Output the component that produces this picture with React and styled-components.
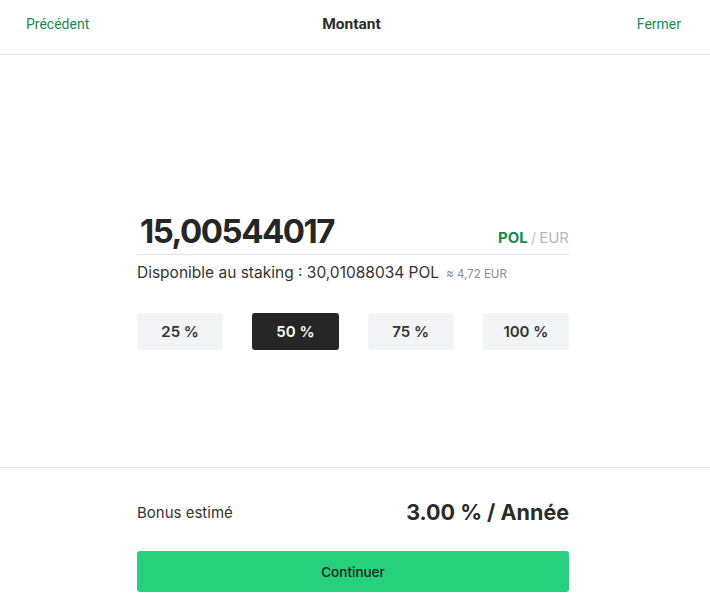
import { useState } from "react";
import styled, { createGlobalStyle } from "styled-components";

const GlobalStyle = createGlobalStyle`
  *, *::before, *::after {
    box-sizing: border-box;
  }
  html, body {
    margin: 0;
    padding: 0;
    background: #fff;
  }
  body {
    font-family: Inter, "Noto Sans", sans-serif;
    color: #2b2b2b;
  }
`;

const PRESETS = [25, 50, 75, 100];

export default function App() {
  const [preset, setPreset] = useState(50);

  return (
    <>
      <GlobalStyle />
      <Page>
        <Header>
          <NavLink type="button">Précédent</NavLink>
          <HeaderTitle>Montant</HeaderTitle>
          <NavLink type="button" $right>
            Fermer
          </NavLink>
        </Header>

        <Main>
          <Column>
            <AmountRow>
              <Amount>15,00544017</Amount>
              <Units>
                <Unit $active>POL</Unit>
                <Slash>/</Slash>
                <Unit>EUR</Unit>
              </Units>
            </AmountRow>
            <Available>
              Disponible au staking : 30,01088034 POL
              <Approx>≈ 4,72 EUR</Approx>
            </Available>
            <Presets>
              {PRESETS.map((p) => (
                <PresetButton
                  key={p}
                  type="button"
                  $active={preset === p}
                  onClick={() => setPreset(p)}
                >
                  {p} %
                </PresetButton>
              ))}
            </Presets>
          </Column>
        </Main>

        <Footer>
          <Column>
            <BonusRow>
              <BonusLabel>Bonus estimé</BonusLabel>
              <BonusValue>3.00 % / Année</BonusValue>
            </BonusRow>
            <ContinueButton type="button">Continuer</ContinueButton>
          </Column>
        </Footer>
      </Page>
    </>
  );
}

const Page = styled.div`
  width: 710px;
  height: 613px;
  overflow: hidden;
  display: flex;
  flex-direction: column;
`;

const Header = styled.header`
  flex: 0 0 55px;
  border-bottom: 1px solid #e4e4e4;
  display: grid;
  grid-template-columns: 1fr auto 1fr;
  align-items: center;
  padding: 0 29px 7px 26px;
  font-family: Roboto, "Liberation Sans", sans-serif;
`;

const NavLink = styled.button`
  background: none;
  border: none;
  padding: 0;
  font-family: inherit;
  font-size: 14px;
  color: #1a8a54;
  cursor: pointer;
  justify-self: ${({ $right }) => ($right ? "end" : "start")};
`;

const HeaderTitle = styled.h1`
  margin: 0 4px 0 0;
  font-size: 15.5px;
  font-weight: 700;
  color: #2b2b2b;
`;

const Main = styled.main`
  flex: 0 0 413px;
  border-bottom: 1px solid #e4e4e4;
  display: flex;
  justify-content: center;
  padding: 156px 4px 0 0;
`;

const Column = styled.div`
  width: 432px;
  display: flex;
  flex-direction: column;
`;

const AmountRow = styled.div`
  display: flex;
  align-items: baseline;
  justify-content: space-between;
  padding: 0 0 3px 3px;
  border-bottom: 1px solid #e4e4e4;
`;

const Amount = styled.div`
  font-size: 33px;
  line-height: 40px;
  font-weight: 700;
  letter-spacing: -1.5px;
  color: #262626;
`;

const Units = styled.div`
  display: flex;
  align-items: baseline;
  gap: 3px;
  font-size: 15px;
`;

const Unit = styled.span`
  font-weight: ${({ $active }) => ($active ? 700 : 400)};
  color: ${({ $active }) => ($active ? "#1a8a54" : "#b8b8b8")};
`;

const Slash = styled.span`
  color: #c4c4c4;
`;

const Available = styled.div`
  margin-top: 8px;
  font-size: 15.5px;
  color: #333;
  display: flex;
  align-items: baseline;
`;

const Approx = styled.span`
  margin-left: 7px;
  font-size: 11.5px;
  color: #8a8a8a;
`;

const Presets = styled.div`
  margin-top: 31px;
  display: grid;
  grid-template-columns: repeat(4, 1fr);
  gap: 29px;
`;

const PresetButton = styled.button`
  height: 37px;
  border: none;
  border-radius: 3px;
  font-family: Inter, "Noto Sans", sans-serif;
  font-size: 15px;
  font-weight: 600;
  cursor: pointer;
  background: ${({ $active }) => ($active ? "#262626" : "#f3f4f6")};
  color: ${({ $active }) => ($active ? "#fff" : "#333")};
`;

const Footer = styled.footer`
  display: flex;
  justify-content: center;
  padding: 29px 4px 0 0;
`;

const BonusRow = styled.div`
  display: flex;
  align-items: center;
  justify-content: space-between;
  height: 30px;
`;

const BonusLabel = styled.span`
  font-size: 15px;
  color: #333;
`;

const BonusValue = styled.span`
  font-size: 21.5px;
  font-weight: 700;
  color: #2b2b2b;
`;

const ContinueButton = styled.button`
  margin-top: 24px;
  height: 41px;
  border: none;
  border-radius: 3px;
  background: #26d07d;
  font-family: Inter, "Noto Sans", sans-serif;
  font-size: 13.5px;
  font-weight: 500;
  color: #222;
  cursor: pointer;
`;
